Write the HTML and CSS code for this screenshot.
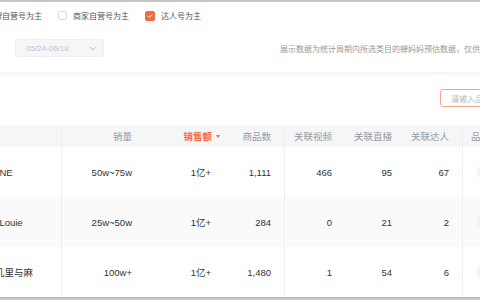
FILE: index.html
```html
<!DOCTYPE html>
<html lang="zh-CN">
<head>
<meta charset="utf-8">
<title>品牌榜</title>
<link rel="stylesheet" href="styles.css">
</head>
<body>
<div class="topbar"></div>
<main class="page">
  <div class="filters">
    <label class="check"><span class="box"></span><span class="check-label">品牌自营号为主</span></label>
    <label class="check"><span class="box"></span><span class="check-label">商家自营号为主</span></label>
    <label class="check"><span class="box checked"><svg viewBox="0 0 10 10" width="10" height="10"><path d="M2.6 5.1 L4.3 6.8 L7.5 3.4" fill="none" stroke="#fff" stroke-width="1.1" stroke-linecap="round" stroke-linejoin="round"/></svg></span><span class="check-label">达人号为主</span></label>
  </div>
  <div class="toolbar">
    <div class="date-select">
      <span>05/24-06/18</span>
      <svg class="chev" viewBox="0 0 8 5" width="8" height="5"><path d="M0.8 0.8 L4 4 L7.2 0.8" fill="none" stroke="#b4b8bf" stroke-width="0.9"/></svg>
    </div>
    <p class="note">展示数据为统计周期内所选类目的蝉妈妈预估数据，仅供参考</p>
  </div>
  <div class="separator"></div>
  <div class="search-row">
    <div class="search">请输入品牌名称</div>
  </div>
  <div class="table">
    <div class="tr thead">
      <div class="td name"></div>
      <div class="td">销量</div>
      <div class="td sorted">销售额<span class="sort"></span></div>
      <div class="td split">商品数</div>
      <div class="td">关联视频</div>
      <div class="td">关联直播</div>
      <div class="td split">关联达人</div>
      <div class="td last">品牌详情</div>
    </div>
    <div class="tr">
      <div class="td name">ONE</div>
      <div class="td">50w~75w</div>
      <div class="td">1亿+</div>
      <div class="td split">1,111</div>
      <div class="td">466</div>
      <div class="td">95</div>
      <div class="td split">67</div>
      <div class="td last"><span class="btn"></span></div>
    </div>
    <div class="tr alt">
      <div class="td name">J.Louie</div>
      <div class="td">25w~50w</div>
      <div class="td">1亿+</div>
      <div class="td split">284</div>
      <div class="td">0</div>
      <div class="td">21</div>
      <div class="td split">2</div>
      <div class="td last"><span class="btn"></span></div>
    </div>
    <div class="tr">
      <div class="td name"><span class="indent">几里与麻</span></div>
      <div class="td">100w+</div>
      <div class="td">1亿+</div>
      <div class="td split">1,480</div>
      <div class="td">1</div>
      <div class="td">54</div>
      <div class="td split">6</div>
      <div class="td last"><span class="btn"></span></div>
    </div>
  </div>
</main>
<div class="bottombar"></div>
</body>
</html>
```
FILE: styles.css
```css
* { box-sizing: border-box; }
html, body {
  margin: 0;
  padding: 0;
}
body {
  width: 480px;
  height: 300px;
  overflow: hidden;
  background: #fff;
  font-family: "Liberation Sans", "Noto Sans CJK SC", sans-serif;
  color: #333;
}
.topbar {
  height: 2px;
  background: #c4c4c4;
}
.page {
  width: 480px;
  overflow: hidden;
}
.filters {
  height: 27px;
  display: flex;
  align-items: center;
  gap: 16px;
  margin-left: -29px;
  font-size: 8px;
  color: #555;
  white-space: nowrap;
}
.check {
  display: flex;
  align-items: center;
  gap: 6px;
  flex: none;
}
.box {
  width: 9px;
  height: 9px;
  border: 1px solid #d9d9d9;
  border-radius: 2px;
  background: #fff;
  display: flex;
  align-items: center;
  justify-content: center;
  flex: none;
}
.box.checked {
  width: 10px;
  height: 10px;
  border-color: #f4693d;
  background: #f4693d;
}
.toolbar {
  margin-top: 10px;
  height: 18px;
  display: flex;
  align-items: center;
  white-space: nowrap;
}
.date-select {
  flex: none;
  margin-left: 15px;
  width: 89px;
  height: 18px;
  background: #f5f6f8;
  border: 1px solid #eceef1;
  border-radius: 3px;
  display: flex;
  align-items: center;
  justify-content: space-between;
  padding: 0 6px 0 10px;
  font-size: 8px;
  color: #c0c4cc;
}
.note {
  flex: none;
  margin: 0 0 0 176px;
  font-size: 8px;
  color: #999;
}
.separator {
  margin-top: 15px;
  height: 3px;
  background: #f7f8fa;
}
.search-row {
  margin-top: 14px;
  height: 18px;
  display: flex;
}
.search {
  margin-left: 440px;
  width: 120px;
  flex: none;
  height: 18px;
  border: 1px solid #f7a68c;
  border-radius: 3px;
  padding-left: 10px;
  display: flex;
  align-items: center;
  font-size: 8px;
  color: #b8b8b8;
  white-space: nowrap;
}
.table {
  margin-top: 18px;
  margin-left: -18px;
  width: 560px;
  font-size: 9.5px;
}
.tr {
  display: grid;
  grid-template-columns: 80px 83px 79px 61px 60px 60px 58px 79px;
  height: 50px;
  align-items: stretch;
}
.thead {
  height: 22px;
  background: #f5f6f8;
  color: #979ba3;
}
.alt {
  background: #fafafa;
}
.td {
  display: flex;
  align-items: center;
  justify-content: flex-end;
  padding-right: 13px;
  white-space: nowrap;
  overflow: visible;
}
.td.name {
  justify-content: flex-start;
  padding-left: 10px;
  border-right: 1px solid #eeeff2;
}
.indent {
  margin-left: 3px;
}
.td.split {
  border-right: 1px solid #eeeff2;
}
.td.last {
  justify-content: flex-start;
  padding-left: 8px;
}
.tr:not(.thead) .td.last {
  padding-left: 14px;
}
.btn {
  width: 30px;
  height: 10px;
  background: #f2f3f5;
  border-radius: 2px;
}
.sorted {
  color: #f56a3d;
  font-weight: bold;
}
.sort {
  width: 0;
  height: 0;
  border-left: 2.5px solid transparent;
  border-right: 2.5px solid transparent;
  border-top: 3px solid #f56a3d;
  margin-left: 4px;
  margin-right: -9px;
}
.bottombar {
  height: 3px;
  background: #cbcbcb;
  border-top: 1px solid #b5b5b5;
}
```
